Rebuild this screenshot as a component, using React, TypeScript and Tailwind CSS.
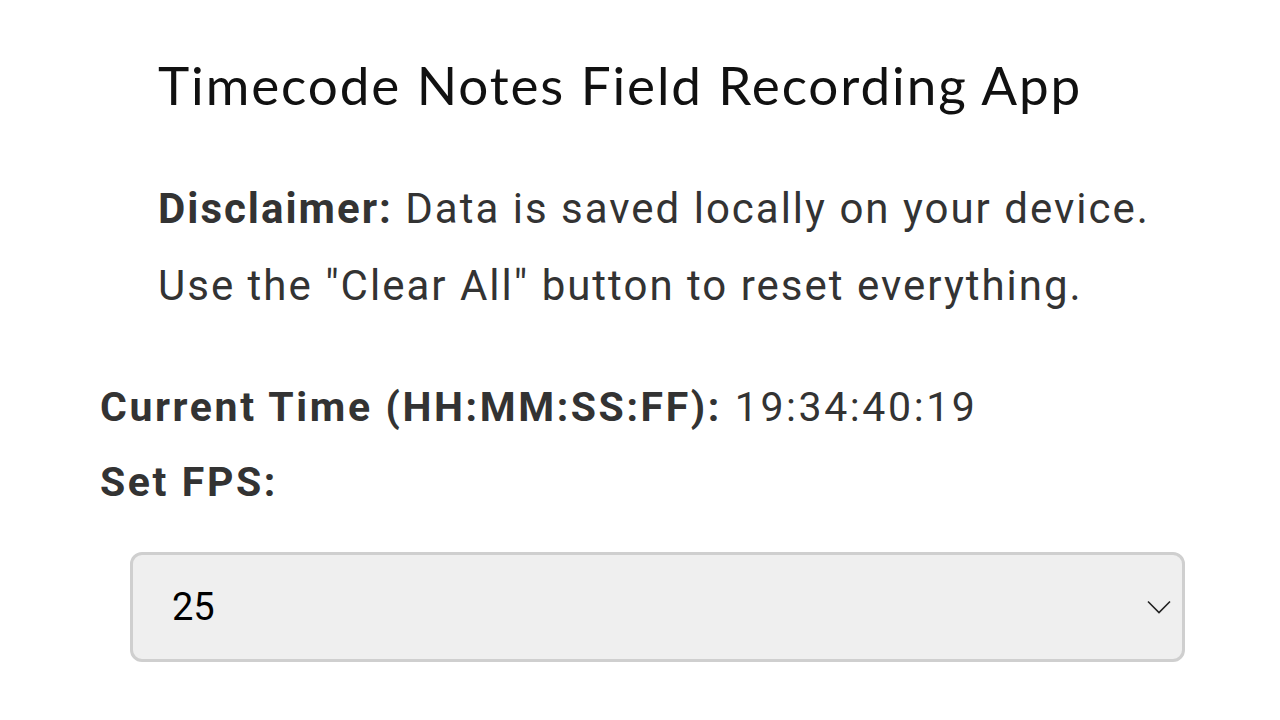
export default function App() {
  return (
    <div className="w-[1280px] h-[720px] bg-white overflow-hidden font-['Roboto',sans-serif]">
      <div className="pl-[100px] pr-[95px] pt-[53px]">
        <h1 className="pl-[58px] font-['Lato',sans-serif] font-normal text-[53px] leading-[64px] tracking-[1.9px] text-[#111]">
          Timecode Notes Field Recording App
        </h1>
        <div className="pl-[58px] mt-[53px] text-[#333] text-[42px] leading-[77px] tracking-[2px]">
          <p>
            <span className="font-bold">Disclaimer:</span> Data is saved locally on your device.
          </p>
          <p>Use the "Clear All" button to reset everything.</p>
        </div>
        <div className="mt-[46px] text-[#333] text-[41px] leading-[75px] tracking-[2.6px]">
          <p>
            <span className="font-bold">Current Time (HH:MM:SS:FF):</span> 19:34:40:19
          </p>
          <p className="font-bold">Set FPS:</p>
        </div>
        <div className="pl-[30px] mt-[32px]">
          <div className="h-[110px] rounded-[12px] border-[3px] border-[#cfcfcf] bg-[#efefef] flex items-center justify-between pl-[39px] pr-[11px]">
            <span className="text-[38px] text-black">25</span>
            <svg width="24" height="14" viewBox="0 0 24 14" fill="none" stroke="#222" strokeWidth="1.6">
              <path d="M1 1.5l11 11 11-11" />
            </svg>
          </div>
        </div>
      </div>
    </div>
  );
}
